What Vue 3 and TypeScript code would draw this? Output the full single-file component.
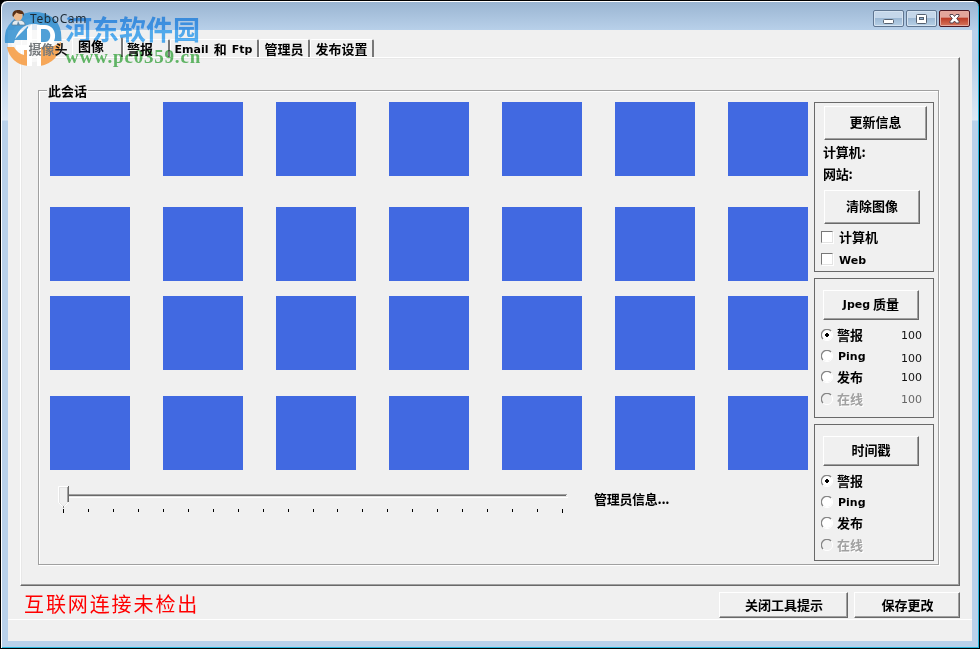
<script setup lang="ts">
interface Choice {
  label: string
  latin?: boolean
  value?: string
  drop?: number
  disabled?: boolean
}

const tabs = [
  { id: 'camera', text: '摄像头', latin: '', tail: '' },
  { id: 'images', text: '图像', latin: '', tail: '' },
  { id: 'alert', text: '警报', latin: '', tail: '' },
  { id: 'email', text: '和', latin: 'Email', tail: 'Ftp' },
  { id: 'admin', text: '管理员', latin: '', tail: '' },
  { id: 'publish', text: '发布设置', latin: '', tail: '' },
]

const quality: Choice[] = [
  { label: '警报', value: '100', drop: 2 },
  { label: 'Ping', latin: true, value: '100', drop: 5 },
  { label: '发布', value: '100', drop: 1 },
  { label: '在线', value: '100', drop: 2, disabled: true },
]

const stamps: Choice[] = [
  { label: '警报' },
  { label: 'Ping', latin: true },
  { label: '发布' },
  { label: '在线', disabled: true },
]
</script>

<template>
  <div class="window">
    <header class="titlebar">
      <svg class="app-icon" width="16" height="18" viewBox="0 0 16 18">
        <path d="M1 16c0-4 3-5 6-5s7 1 7 5z" fill="#e4ebf0" stroke="#5c7a90" stroke-width=".7" />
        <circle cx="7" cy="7" r="4.600" fill="#edb98c" />
        <path d="M1.500 7C1 2 4 1 7.500 1s6 2 5.500 6.500l-1-2.500c-3 0-5-.5-6.500-1.500C4.500 5 3 5.500 2.500 8z" fill="#5a3015" />
        <path d="M7 12l2 4h-3z" fill="#5c87a8" />
      </svg>
      <span class="caption">TeboCam</span>
      <div class="controls">
        <button class="ctl"><svg width="29" height="15"><rect x="9.500" y="8.500" width="10" height="4" rx="1" fill="#fff" stroke="#55606f" /></svg></button>
        <button class="ctl"><svg width="29" height="15"><rect x="9.500" y="3.500" width="10" height="9" rx="1" fill="#fff" stroke="#55606f" /><rect x="12.500" y="6.500" width="4" height="2" fill="#8eb0d0" stroke="#55606f" /></svg></button>
        <button class="ctl close"><svg width="29" height="15"><path d="M10 3.500h3l1.500 2 1.500-2h3v1.500L16.700 7.500 19 10.500v1.500h-3l-1.500-2-1.500 2h-3v-1.500l2.300-3L10 5z" fill="#fff" stroke="#5a4650" /></svg></button>
      </div>
    </header>

    <main class="client">
      <nav class="tabs">
        <div v-for="t in tabs" :key="t.id" class="tab" :class="t.id">
          <span v-if="t.latin" class="latin">{{ t.latin }}</span>
          <span>{{ t.text }}</span>
          <span v-if="t.tail" class="latin">{{ t.tail }}</span>
        </div>
      </nav>

      <section class="page">
        <fieldset class="session">
          <legend>此会话</legend>
          <div class="body">
            <div class="left">
              <div class="grid">
                <div v-for="n in 28" :key="n" class="thumb"></div>
              </div>
              <div class="lower">
                <svg class="slider" width="512" height="30" viewBox="0 0 512 30">
                  <rect x="9" y="8" width="500" height="1" fill="#a0a0a0" />
                  <rect x="9" y="9" width="499" height="1" fill="#696969" />
                  <rect x="9" y="10" width="500" height="1" fill="#e3e3e3" />
                  <rect x="9" y="11" width="501" height="1" fill="#fff" />
                  <path d="M1 0h10v16l-5 5-5-5z" fill="#f0f0f0" />
                  <path d="M10.500 .5H.5v16l5 5 5-5" fill="none" stroke="#fff" />
                  <path d="M1.500 1.500v15l4 4 4-4M1.500 1.500h8" fill="none" stroke="#e3e3e3" />
                  <rect x="9" y="1" width="1" height="15" fill="#a0a0a0" />
                  <rect x="10" y="0" width="1" height="16" fill="#696969" />
                  <rect x="5" y="20" width="1" height="2" fill="#888" />
                  <rect
                    v-for="n in 21" :key="n" :x="Math.round(5 + (n - 1) * 24.95)" y="23" width="1"
                    :height="n === 1 || n === 21 ? 4 : 3" fill="#000"
                  />
                </svg>
                <span class="admin-info">管理员信息...</span>
              </div>
            </div>

            <aside class="side">
              <div class="box info">
                <button class="btn wide">更新信息</button>
                <div class="line">计算机:</div>
                <div class="line">网站:</div>
                <button class="btn clear">清除图像</button>
                <label class="check"><i></i><span>计算机</span></label>
                <label class="check"><i></i><span class="latin">Web</span></label>
              </div>
              <div class="box jpeg">
                <button class="btn"><span class="latin">Jpeg</span>&nbsp;质量</button>
                <div v-for="(c, i) in quality" :key="i" class="radio" :class="{ off: c.disabled }">
                  <svg width="12" height="12" viewBox="0 0 12 12">
                    <circle cx="6" cy="6" r="5" :fill="c.disabled ? '#f0f0f0' : '#fff'" />
                    <path d="M2 10A5.500 5.500 0 0 1 10 2" fill="none" stroke="#858585" stroke-width="1.300" />
                    <path d="M10 2A5.500 5.500 0 0 1 2 10" fill="none" stroke="#fff" />
                    <path v-if="i === 0" d="M5 4h2v1h1v2H7v1H5V7H4V5h1z" fill="#000" />
                  </svg>
                  <span :class="{ latin: c.latin }">{{ c.label }}</span>
                  <b class="num" :style="{ paddingTop: c.drop + 'px' }">{{ c.value }}</b>
                </div>
              </div>
              <div class="box stamp">
                <button class="btn">时间戳</button>
                <div v-for="(c, i) in stamps" :key="i" class="radio" :class="{ off: c.disabled }">
                  <svg width="12" height="12" viewBox="0 0 12 12">
                    <circle cx="6" cy="6" r="5" :fill="c.disabled ? '#f0f0f0' : '#fff'" />
                    <path d="M2 10A5.500 5.500 0 0 1 10 2" fill="none" stroke="#858585" stroke-width="1.300" />
                    <path d="M10 2A5.500 5.500 0 0 1 2 10" fill="none" stroke="#fff" />
                    <path v-if="i === 0" d="M5 4h2v1h1v2H7v1H5V7H4V5h1z" fill="#000" />
                  </svg>
                  <span :class="{ latin: c.latin }">{{ c.label }}</span>
                </div>
              </div>
            </aside>
          </div>
        </fieldset>
      </section>

      <footer class="actions">
        <span class="warning">互联网连接未检出</span>
        <button class="btn tips">关闭工具提示</button>
        <button class="btn save">保存更改</button>
      </footer>
      <div class="status"></div>
    </main>

    <svg class="wm-logo" width="60" height="60" viewBox="0 0 60 60">
      <circle cx="29" cy="31" r="22" fill="#fff" opacity=".55" />
      <path d="M2 21C8 9 18 3 30 3c14 0 25 7 27 20l.5 9H49c0-9-7-16-17-17-12-1-19 6-22 19H1c-.5-5 0-9 1-13z" fill="#318fd0" opacity=".85" />
      <path d="M3 38h7c2 4 6 7 10 8v-9h8v20h-4C13 56 5 49 3 38zM33 37h17l7-4c0 13-9 22-21 24h-3z" fill="#f79a3e" opacity=".85" />
      <path d="M10 31l14-14v14z" fill="#318fd0" opacity=".85" />
      <path d="M12 36h11V20l5-5v42h-5V41H12zM33 16h8c13 0 14 21 0 22h-4v19h-4z" fill="#fff" />
      <path d="M37 20h4c7 0 7 13 0 13h-4z" fill="#318fd0" opacity=".85" />
    </svg>
    <div class="wm-text">
      <div class="wm-name">河东软件园</div>
      <div class="wm-url">www.pc0359.cn</div>
    </div>
  </div>
</template>

<style>
body { margin: 0; background: #000; overflow: hidden; }
</style>

<style scoped>
* { box-sizing: border-box; }
.window {
  position: relative;
  width: 980px;
  height: 649px;
  padding: 0 7px 7px;
  display: flex;
  flex-direction: column;
  overflow: hidden;
  border: 1px solid #000;
  border-radius: 7px 7px 0 0;
  background: linear-gradient(#99b4d1 0, #b9d1ea 30px, #b9d1ea 60px, #dce8f5 119px, #b9d1ea 120px);
  box-shadow: inset 1px 1px 0 #fff, inset -1px -1px 0 #27b5da;
  font: bold 13px/16px "Noto Sans CJK SC", sans-serif;
  color: #000;
}
.latin { font-family: "DejaVu Sans", sans-serif; font-size: 11px; padding-top: 1px; }
.titlebar { height: 29px; flex: none; display: flex; align-items: flex-start; padding: 8px 2px 0 3px; }
.app-icon { position: relative; z-index: 3; }
.caption { position: relative; z-index: 3; margin: 2px 0 0 3px; font: 12px/16px "Noto Sans", sans-serif; color: #1c2a36; letter-spacing: .6px; }
.controls { margin-left: auto; display: flex; gap: 2px; padding-top: 1px; }
.ctl {
  width: 31px; height: 17px; padding: 0; display: flex;
  border: 1px solid #5f7590; border-radius: 2px;
  background: linear-gradient(#c5d7ea 0 48%, #9db9d5 50%, #b7d0e6);
  box-shadow: inset 0 0 0 1px #d5e3f1;
}
.ctl.close { border-color: #4b1722; background: linear-gradient(#e3a59b 0 40%, #bd3e29 50%, #d6765c); box-shadow: inset 0 0 0 1px #e5aaa0; }
.client { width: 964px; height: 611px; flex: none; background: #f0f0f0; display: flex; flex-direction: column; }
.tabs { height: 27px; flex: none; display: flex; align-items: flex-end; padding-left: 13px; }
.tab {
  height: 18px; display: flex; gap: 5px; justify-content: center; align-items: center; white-space: nowrap;
  border: solid; border-width: 1px 2px 0 1px; border-color: #fff #777 #fff #fff; border-radius: 2px 2px 0 0;
}
.camera { width: 51px; border-right: 0; padding-left: 2px; }
.camera span { position: relative; z-index: 3; color: transparent; background: linear-gradient(90deg, #73777a 65%, #111 72%); background-clip: text; }
.images { width: 51px; height: 20px; padding: 0 12px 3px 0; }
.alert { width: 47px; padding-right: 12px; }
.email { width: 89px; padding-right: 1px; }
.email .latin { padding-top: 2px; letter-spacing: .05px; }
.admin { width: 51px; }
.publish { width: 64px; }
.page {
  width: 940px; height: 529px; flex: none; margin-left: 12px; padding: 23px 0 0 17px;
  border: 1px solid; border-color: #fff #696969 #696969 #fff;
  box-shadow: inset -1px -1px 0 #a0a0a0, inset 1px 1px 0 #e8e8e8;
}
.session {
  width: 901px; height: 484px; margin: 0; padding: 0; min-width: 0;
  border: 1px solid #a0a0a0; box-shadow: inset 1px 1px 0 #fff, 1px 1px 0 #fff;
}
.session legend { margin-left: 8px; padding: 0 0 0 1px; height: 18px; line-height: 20px; width: 41px; white-space: nowrap; background: #f0f0f0; }
.body { display: flex; padding-top: 1px; }
.left { width: 775px; padding: 2px 0 0 11px; flex: none; }
.grid { display: grid; grid-template-columns: repeat(7, 80px); grid-template-rows: 105px 89px 100px 74px; column-gap: 33px; }
.thumb { height: 74px; background: #4169e1; }
.lower { display: flex; padding: 16px 0 0 8px; }
.admin-info { margin: 5px 0 0 24px; letter-spacing: -.3px; }
.side { width: 120px; display: flex; flex-direction: column; gap: 6px; padding-top: 2px; }
.box { border: 1px solid #696969; display: flex; flex-direction: column; align-items: flex-start; }
.btn {
  border: 1px solid; border-color: #fff #696969 #696969 #fff; box-shadow: inset -1px -1px 0 #a0a0a0;
  background: #f0f0f0; font: inherit; color: inherit; padding: 0 0 2px; flex: none;
  display: flex; align-items: center; justify-content: center;
}
.info { height: 170px; padding: 3px 0 0 9px; }
.btn.wide { width: 103px; height: 34px; margin-bottom: 1px; }
.line { height: 22px; line-height: 22px; margin-left: -1px; letter-spacing: -.2px; }
.btn.clear { width: 96px; height: 34px; margin: 5px 0 2px; }
.check { height: 22px; margin-left: -3px; display: flex; align-items: center; gap: 6px; }
.check i { width: 12px; height: 12px; margin-top: -1px; background: #fff; border: 1px solid; border-color: #777 #e3e3e3 #e3e3e3 #777; box-shadow: 1px 1px 0 #fff; }
.check .latin { padding-top: 3px; }
.jpeg { height: 140px; padding: 11px 0 0 8px; }
.jpeg .btn { width: 96px; height: 30px; margin-bottom: 4px; }
.stamp { height: 137px; padding: 11px 0 0 8px; }
.stamp .btn { width: 96px; height: 30px; margin-bottom: 4px; }
.radio { width: 101px; height: 21.4px; margin-left: -2px; display: flex; align-items: center; gap: 4px; }
.radio svg { flex: none; }
.radio .latin { padding-left: 1px; }
.off { color: #a0a0a0; text-shadow: 1px 1px 0 #fff; }
.num { margin-left: auto; font: 11px/16px "DejaVu Sans", sans-serif; color: #111; }
.off .num { color: #666; text-shadow: none; }
.actions { height: 33px; flex: none; display: flex; align-items: flex-start; padding: 6px 12px 0 16px; }
.warning { font: 20px/24px "Noto Sans CJK SC", sans-serif; color: #f00; letter-spacing: 1.900px; }
.actions .btn { padding: 0 0 0 1px; }
.tips { width: 129px; height: 26px; margin-left: auto; }
.save { width: 106px; height: 26px; margin-left: 6px; }
.status { height: 22px; border-top: 1px solid #fff; }
.wm-logo { position: absolute; left: 3px; top: 8px; z-index: 1; }
.wm-text { position: absolute; left: 64px; top: 8px; z-index: 2; mix-blend-mode: multiply; pointer-events: none; }
.wm-name { font: bold 27px/32px "Noto Sans CJK SC", sans-serif; color: #56b4fa; padding-top: 4px; }
.wm-url { font: bold 19px/20px "Liberation Serif", serif; color: #66bf6b; letter-spacing: .8px; margin-top: 2px; }
</style>
